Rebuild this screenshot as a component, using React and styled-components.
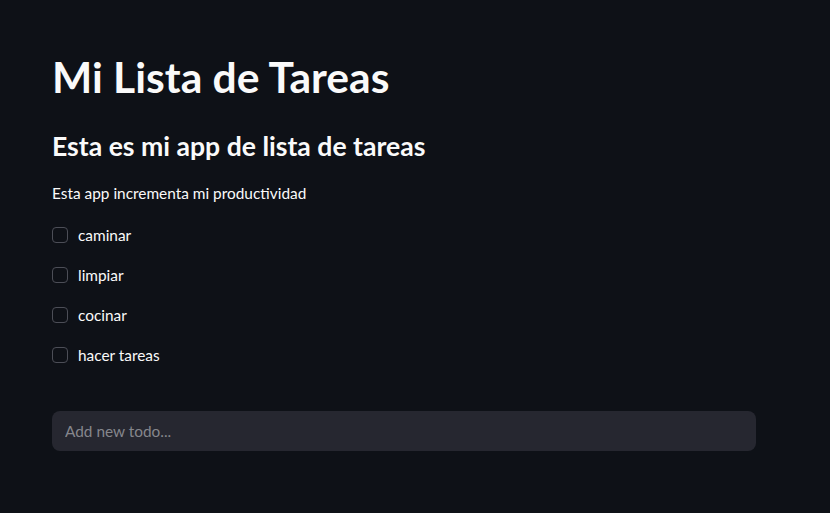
import React, { useState } from 'react'
import styled, { createGlobalStyle } from 'styled-components'

const Global = createGlobalStyle`
  body {
    margin: 0;
    background: #0e1117;
    color: #fafafa;
    font-family: Lato, "Noto Sans", sans-serif;
  }
`

const Page = styled.main`
  min-height: 513px;
  padding: 51px 0 0 52px;
  box-sizing: border-box;
`

const Column = styled.div`
  width: 704px;
  display: flex;
  flex-direction: column;
`

const Title = styled.h1`
  margin: 0;
  font-size: 42.6px;
  line-height: 1.2;
  font-weight: 700;
`

const Subtitle = styled.h2`
  margin: 29px 0 0;
  font-size: 26.6px;
  line-height: 1.2;
  font-weight: 700;
`

const Text = styled.p`
  margin: 19px 0 0;
  font-size: 15.4px;
  line-height: 1.5;
`

const TodoList = styled.div`
  margin-top: 18px;
  display: flex;
  flex-direction: column;
  gap: 16px;
`

const Todo = styled.label`
  display: flex;
  align-items: center;
  gap: 10px;
  height: 24px;
  font-size: 15.4px;
  line-height: 24px;
  cursor: pointer;
`

const Box = styled.span`
  width: 16px;
  height: 16px;
  box-sizing: border-box;
  border: 1px solid ${p => (p.$checked ? '#ff4b4b' : '#4c4e57')};
  background: ${p => (p.$checked ? '#ff4b4b' : 'transparent')};
  border-radius: 4px;
  flex-shrink: 0;
`

const Hidden = styled.input`
  display: none;
`

const NewTodo = styled.input`
  margin-top: 44px;
  height: 40px;
  border: none;
  outline: none;
  border-radius: 8px;
  background: #262730;
  color: #fafafa;
  padding: 0 13px;
  font-family: Lato, "Noto Sans", sans-serif;
  font-size: 15.4px;
  &::placeholder {
    color: #85868c;
  }
`

const initial = ['caminar', 'limpiar', 'cocinar', 'hacer tareas']

const App = () => {
  const [done, setDone] = useState({})
  return (
    <Page>
      <Global />
      <Column>
        <Title>Mi Lista de Tareas</Title>
        <Subtitle>Esta es mi app de lista de tareas</Subtitle>
        <Text>Esta app incrementa mi productividad</Text>
        <TodoList>
          {initial.map(t => (
            <Todo key={t}>
              <Hidden
                type="checkbox"
                checked={!!done[t]}
                onChange={() => setDone({ ...done, [t]: !done[t] })}
              />
              <Box $checked={!!done[t]} />
              {t}
            </Todo>
          ))}
        </TodoList>
        <NewTodo placeholder="Add new todo..." />
      </Column>
    </Page>
  )
}

export default App
